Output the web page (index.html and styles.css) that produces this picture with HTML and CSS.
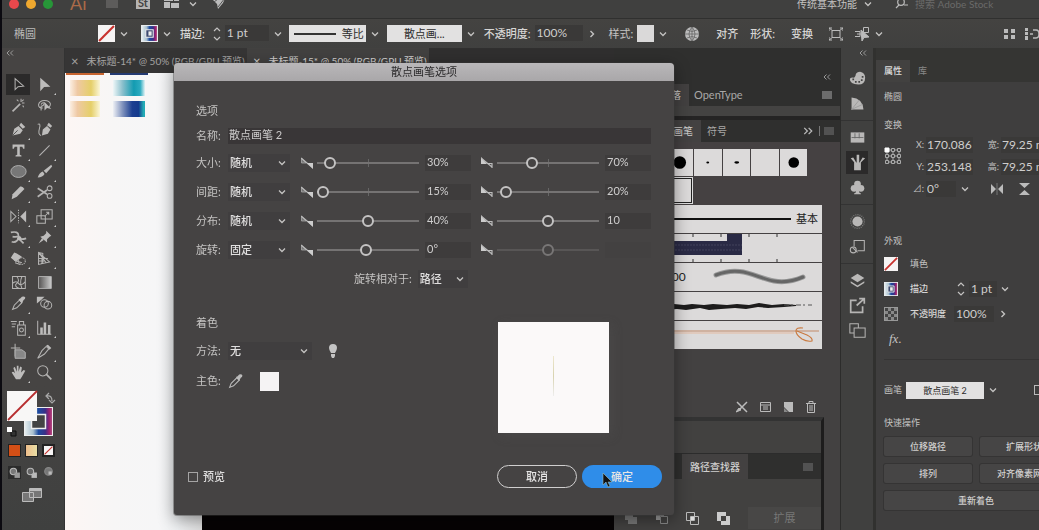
FILE: index.html
```html
<!DOCTYPE html>
<html lang="zh-CN">
<head>
<meta charset="utf-8">
<title>散点画笔选项</title>
<link rel="stylesheet" href="styles.css">
</head>
<body>
<svg class="defs" aria-hidden="true">
  <defs>
    <linearGradient id="strokeRamp"><stop offset="0" stop-color="#e4ecee"/><stop offset=".3" stop-color="#a9c0cf"/><stop offset=".5" stop-color="#1d4ba0"/><stop offset=".75" stop-color="#3a2f86"/><stop offset=".9" stop-color="#9c2170"/><stop offset="1" stop-color="#b04a80"/></linearGradient>
    <linearGradient id="fade"><stop offset="0" stop-color="#ccc" stop-opacity=".1"/><stop offset="1" stop-color="#ccc"/></linearGradient>
  </defs>
  <symbol id="chev" viewBox="0 0 10 10"><path d="M2 3.500 5 6.500l3-3" fill="none" stroke="currentColor" stroke-width="1.300"/></symbol>
  <symbol id="right" viewBox="0 0 10 10"><path d="M3.500 2 6.500 5l-3 3" fill="none" stroke="currentColor" stroke-width="1.400"/></symbol>
  <symbol id="spin" viewBox="0 0 8 16"><path d="M1 5l3-3 3 3M1 11l3 3 3-3" fill="none" stroke="currentColor" stroke-width="1.200"/></symbol>
  <symbol id="dbl" viewBox="0 0 8 6"><path d="M3.500.500 1 3l2.500 2.500M7 .500 4.500 3 7 5.500" fill="none" stroke="currentColor"/></symbol>
  <symbol id="menu" viewBox="0 0 10 8"><path d="M0 1h10M0 3h10M0 5h10M0 7h10" stroke="currentColor" fill="none"/></symbol>
  <symbol id="none" viewBox="0 0 16 16"><path d="M0 0h16v16H0z" fill="#f6f4f4"/><path d="M1 15 15 1" stroke="#c8322e" stroke-width="2"/></symbol>
  <symbol id="ramp" viewBox="0 0 16 16"><path d="M0 0h16v16H0z" fill="#e8ecee"/><path d="M1 1h14v14H1z" fill="url(#strokeRamp)"/><path d="M4.500 4.500h7v7h-7z" fill="#3c4a70" stroke="#eee"/><path d="M7 6h3v4H7z" fill="#eee"/></symbol>
  <symbol id="linkramp" viewBox="0 0 12 12"><path d="M.500 1v5H5z" fill="#777" stroke="#aaa" stroke-width=".8"/><path d="M0 1 12 11" stroke="#bbb" stroke-width="1.200"/><path d="M6 6h6v6z" fill="#ccc"/></symbol>
  <symbol id="bent" viewBox="0 0 12 12"><path d="M0 0v7h6z" fill="#ccc"/><path d="M0 1 11 10M6 6.500h5V11" fill="none" stroke="#bbb" stroke-width="1.200"/></symbol>
</svg>

<div class="app">
  <header class="topbar">
    <i class="light red"></i><i class="light amber"></i><i class="light green"></i>
    <span class="logo">Ai</span>
    <svg class="t-home" width="14" height="16"><path d="M1 1h9l3 3v11H1z" fill="#5d5c5b"/></svg>
    <span class="stock">St</span>
    <svg class="t-arr" width="15" height="14" fill="#bbb"><path d="M0 0h9v6H0zM0 7h6v6H0zM10 0h5v6h-5zM7 8h8v5H7z"/></svg>
    <svg class="ic10"><use href="#chev"/></svg>
    <svg class="t-gpu" width="14" height="15" fill="#bbb"><path d="M0 6 9 0h5l-4 9-5 6-1-5z"/><path d="m1 8 8-6M5 13l7-9" stroke="#555"/></svg>
    <button class="workspace-menu">传统基本功能 <svg class="ic10"><use href="#chev"/></svg></button>
    <label class="search"><svg width="14" height="12" fill="none" stroke="#bbb" stroke-width="1.200"><circle cx="6" cy="4" r="3.300"/><path d="M4 7 1 10M9 7h4"/></svg><input type="text" placeholder="搜索 Adobe Stock" aria-label="搜索"></label>
  </header>

  <div class="control">
    <span class="kind">椭圆</span>
    <svg class="sw"><use href="#none"/></svg><svg class="ic10"><use href="#chev"/></svg>
    <svg class="sw ml"><use href="#ramp"/></svg><svg class="ic10"><use href="#chev"/></svg>
    <label class="bold ml1" for="weight">描边:</label>
    <svg class="spin"><use href="#spin"/></svg>
    <input class="num w44" id="weight" value="1 pt"><svg class="ic10"><use href="#chev"/></svg>
    <button class="white profile"><i></i>等比</button><svg class="ic10"><use href="#chev"/></svg>
    <button class="white brush">散点画...</button><svg class="ic10"><use href="#chev"/></svg>
    <label class="bold ml1" for="opac">不透明度:</label>
    <input class="num w48" id="opac" value="100%"><svg class="ic10"><use href="#right"/></svg>
    <span class="ml">样式:</span><i class="style-sw"></i><svg class="ic10"><use href="#chev"/></svg>
    <svg class="ml2" width="16" height="16" viewBox="0 0 16 16"><circle cx="8" cy="8" r="7" fill="#bbb"/><path d="M8 1v14M1 8h14M3 4q5 3 10 0M3 12q5-3 10 0M8 1q-6 7 0 14M8 1q6 7 0 14" fill="none" stroke="#666" stroke-width=".8"/></svg>
    <span class="bold ml2">对齐</span><span class="bold ml">形状:</span><span class="bold ml2">变换</span>
    <svg class="ml2" width="14" height="14" fill="none" stroke="#bbb"><path d="M3 3.500h8v7H3zM0 4V1h3M11 1h3v3M14 10v3h-3M3 13H0v-3M0 1l4 3M14 1l-4 3M0 13l4-3M14 13l-4-3"/></svg>
    <svg class="ml" width="15" height="14" fill="none" stroke="#bbb"><path d="M8.500.500h5v5h-5zM0 4.500h5v5H0M2 7h4"/><path d="m6 3 8 7-5 .500L7 14z" fill="#bbb"/></svg><svg class="ic10"><use href="#chev"/></svg>
    <svg class="push" width="11" height="12" fill="#bbb"><path d="M0 1h4v4H0zM7 1h4v4H7zM0 7h4v4H0zM7 7h4v4H7z"/></svg>
    <svg class="endic" width="14" height="12" fill="#bbb"><path d="M0 0h3v3H0zM0 4h3v3H0zM0 8h3v4H0z"/><path d="M5 6h3M8 2h3q3 0 3 4t-3 4H8" fill="none" stroke="#bbb" stroke-width="1.500"/></svg>
  </div>

  <div class="work">
    <aside class="tools">
      <svg class="collapse"><use href="#dbl"/></svg>
      <div class="toolset">
        <button class="tool on" aria-label="选择"><svg viewBox="0 0 20 20"><path d="M6 3v13l3.500-3.500L16 12z" class="ln"/></svg></button>
        <button class="tool more" aria-label="直接选择"><svg viewBox="0 0 20 20"><path d="M5 2v16l4.500-5 7.500-.500z"/></svg></button>
        <button class="tool" aria-label="魔棒"><svg viewBox="0 0 20 20"><path d="m3 17 9-9" class="th"/><path d="M13 2v4M17 7h-3M16 3l-2 2M8 3l2 2M15 10l1 2" class="ln"/></svg></button>
        <button class="tool" aria-label="套索"><svg viewBox="0 0 20 20"><path d="M8 13q-5 0-5-4 1-5 7-5t7 4q0 3-2 4M6 9q1-3 4-2-1 4-4 4v5" class="ln"/><path d="M10 6v10l3-3 5 1z"/></svg></button>
      </div>
      <div class="toolset">
        <button class="tool more" aria-label="钢笔"><svg viewBox="0 0 20 20"><path d="m3 17 2-8 5-3 5 5-3 4-9 2zM11 5l2-3 5 5-3 2z"/><path d="m3 17 6-6" stroke="#444"/></svg></button>
        <button class="tool" aria-label="曲率"><svg viewBox="0 0 20 20"><path d="m7 17 1-7 5-4 4 4-3 5zM13 5l2-3 4 4-2 2z"/><path d="M2 4q4-2 2 5t2 8" class="ln"/></svg></button>
        <button class="tool more" aria-label="文字"><svg viewBox="0 0 20 20"><path d="M3 3h14v5h-1.500l-1-2.500h-3V15l2 1v1h-7v-1l2-1V5.500h-3L4.500 8H3z"/></svg></button>
        <button class="tool more" aria-label="直线"><svg viewBox="0 0 20 20"><path d="M4 16 16 4" class="ln"/></svg></button>
        <button class="tool more" aria-label="椭圆"><svg viewBox="0 0 20 20"><ellipse cx="10" cy="10" rx="9" ry="7" fill="#777" stroke="#bbb"/></svg></button>
        <button class="tool more" aria-label="画笔"><svg viewBox="0 0 20 20"><path d="M18 2 9 9l3 3 7-8zM8 10q-4 1-6 7 6 0 8-4z"/></svg></button>
        <button class="tool more" aria-label="铅笔"><svg viewBox="0 0 20 20"><path d="m2 18 1-6 9-9q3-1 5 3l-9 9z"/></svg></button>
        <button class="tool more" aria-label="剪刀"><svg viewBox="0 0 20 20"><path d="m2 5 11 7M2 15l11-8" class="th"/><circle cx="16" cy="5" r="2.800" class="ln"/><circle cx="16" cy="14" r="2.800" class="ln"/></svg></button>
      </div>
      <div class="toolset">
        <button class="tool more" aria-label="镜像"><svg viewBox="0 0 20 20"><path d="M1 4v12l6-6z" class="ln"/><path d="M19 3v14l-7-7z"/><path d="M10 2v16" class="ln" stroke-dasharray="1.500 1.500"/></svg></button>
        <button class="tool more" aria-label="比例缩放"><svg viewBox="0 0 20 20"><path d="M6 2h13v11H6zM1 9h10v9H1zM10 10l5-5M12 5h3v3" class="ln"/></svg></button>
        <button class="tool more" aria-label="宽度"><svg viewBox="0 0 20 20"><path d="M1 4q9-2 9 4t9 3M2 15q6 2 9-6M3 9q5 1 8-1M11 12l5 5" class="th"/><circle cx="11" cy="11" r="2.500"/></svg></button>
        <button class="tool more" aria-label="操控变形"><svg viewBox="0 0 20 20"><path d="m12 2 6 6-2 1-3 3v4L5 9l4-1 3-3zM3 17l4-6 2 2z"/></svg></button>
        <button class="tool more" aria-label="形状生成器"><svg viewBox="0 0 20 20"><path d="M3 6 5 3l3 1 6 4-7 6-6-5z"/><circle cx="14" cy="13" r="4" class="ln" stroke-dasharray="1.500 1"/><path d="m5 12 9 3M6 15l6 2" class="ln"/></svg></button>
        <button class="tool more" aria-label="透视网格"><svg viewBox="0 0 20 20"><path d="M3 3v14l13-3zM3 10h11M3 3l9 12M7 6v10M3 13h8M3 3l5 1v11" class="ln"/></svg></button>
      </div>
      <div class="toolset">
        <button class="tool" aria-label="网格"><svg viewBox="0 0 20 20"><path d="M3 3h15v14H3zM3 11q4-4 7 0t8-2M8 3q4 5 0 8t3 6M14 3q-3 7 0 14" class="ln"/></svg></button>
        <button class="tool" aria-label="渐变"><svg viewBox="0 0 20 20"><path d="M3 3h15v14H3z" style="fill:url(#fade);stroke:#bbb"/></svg></button>
        <button class="tool more" aria-label="吸管"><svg viewBox="0 0 20 20"><path d="M3 17 5 12l6-6 3 3-6 6z" class="ln"/><path d="m10 5 2-1 2-2q3-1 4 1 0 2-2 3l-2 4z"/></svg></button>
        <button class="tool" aria-label="混合"><svg viewBox="0 0 20 20"><path d="M1 2h9L6 6l-5 4z"/><circle cx="10" cy="10" r="4.500" class="ln"/><circle cx="14" cy="12" r="4.500" class="ln"/></svg></button>
      </div>
      <div class="toolset">
        <button class="tool more" aria-label="符号喷枪"><svg viewBox="0 0 20 20"><path d="M9 7h9v12H9zM11 7V3h5v4M1 3h7M2 6h5M2 9h4" class="ln"/><circle cx="13.500" cy="13" r="2.300" class="ln"/></svg></button>
        <button class="tool more" aria-label="柱形图"><svg viewBox="0 0 20 20"><path d="M2 2v16h16" class="ln"/><path d="M5 10h3v8H5zM9 4h3v14H9zM14 7h3v11h-3z"/></svg></button>
      </div>
      <div class="toolset">
        <button class="tool" aria-label="画板"><svg viewBox="0 0 20 20"><path d="M1 6h11M6 1v15" class="ln"/><path d="M6 8h8l4 3v7H6z" fill="#888" stroke="#bbb"/></svg></button>
        <button class="tool more" aria-label="切片"><svg viewBox="0 0 20 20"><path d="M2 18 7 9l5-5 3 3-5 6z" class="ln"/><path d="m12 3 2-1 4 4-2 2z"/></svg></button>
        <button class="tool more" aria-label="抓手"><svg viewBox="0 0 20 20"><path d="m7 18-5-8q2-2 4 1L4 5q1-2 2-1l2 5V2h2v7l2-6 2 1-1 6 3-3 2 1-4 7-2 3z"/></svg></button>
        <button class="tool" aria-label="缩放"><svg viewBox="0 0 20 20"><circle cx="8" cy="8" r="6" class="ln"/><path d="m12 12 6 6" class="th"/></svg></button>
      </div>
      <svg class="paint" viewBox="0 0 50 50"><path d="M17 17h29v29H17z" fill="#eee"/><path d="M18 18h27v27H18z" fill="url(#strokeRamp)"/><path d="M24.500 24.500h14v14h-14z" fill="#444" stroke="#eee" stroke-width="1.500"/><path d="M0 1h30v30H0z" fill="#f8f7f6"/><path d="M1 30 30 1" stroke="#b72d2e" stroke-width="1.800"/><path d="m42 3-3 3 3 3M40 6q5-1 5 5M42 10l3 3 3-3" fill="none" stroke="#aaa" stroke-width="1.200"/><path d="M4 41h5v5H4z" fill="#333" stroke="#111"/><path d="M0 37h5v5H0z" fill="#fff"/></svg>
      <div class="trio">
        <button class="chip orange" aria-label="颜色"></button><button class="chip tan" aria-label="渐变"></button><button class="chip nil" aria-label="无"><svg><use href="#none"/></svg></button>
      </div>
      <div class="trio modes">
        <button class="chip sel" aria-label="正常绘图"><svg viewBox="0 0 12 12"><circle cx="5" cy="5" r="3" fill="#777" stroke="#bbb"/><path d="M6 6h5v5H6z" fill="#999"/></svg></button><button class="chip" aria-label="背面绘图"><svg viewBox="0 0 12 12"><path d="M6 6h5v5H6z" fill="#bbb"/><circle cx="5" cy="5" r="3" fill="#666" stroke="#bbb"/></svg></button><button class="chip" aria-label="内部绘图"><svg viewBox="0 0 12 12"><circle cx="6" cy="5" r="3.500" fill="#777" stroke="#888"/><path d="M6 5h3v3H6z" fill="#bbb"/></svg></button>
      </div>
      <button class="screen" aria-label="屏幕模式"><svg width="20" height="16" fill="#777" stroke="#bbb"><path d="M.500 4.500h11v9H.500zM7.500.500h12v9h-12z"/><path d="M7 2h12" stroke-width="2"/></svg></button>
    </aside>

    <main class="doc">
      <nav class="tabs">
        <button class="doctab"><b>×</b>未标题-14* @ 50% (RGB/GPU 预览)</button>
        <button class="doctab open"><b>×</b>未标题-15* @ 50% (RGB/GPU 预览)</button>
      </nav>
      <div class="canvas">
        <div class="artboard">
          <i class="g-orange"></i><i class="g-navy"></i>
          <i class="g-yellow"></i><i class="g-teal"></i>
          <i class="g-yellow"></i><i class="g-blue"></i>
        </div>
      </div>
    </main>

    <section class="panels">
      <svg class="collapse end"><use href="#dbl"/></svg>
      <div class="ptabs type"><button class="ptab act">段落</button><button class="ptab lat">OpenType</button><svg class="pmenu"><use href="#menu"/></svg></div>
      <div class="strip"></div>
      <div class="ptabs brushes"><button class="ptab act">画笔</button><button class="ptab">符号</button><svg class="dblr" viewBox="0 0 8 6"><path d="M1 .500 3.500 3 1 5.500M4.500.500 7 3 4.500 5.500" fill="none" stroke="currentColor"/></svg><i class="bar"></i><svg class="pmenu dim"><use href="#menu"/></svg></div>
      <div class="brushbody">
        <div class="dots">
          <i></i>
          <svg viewBox="0 0 28 28"><circle cx="14" cy="14" r="6.500"/></svg>
          <svg viewBox="0 0 28 28"><ellipse cx="14" cy="14" rx="1.500" ry="1"/></svg>
          <svg viewBox="0 0 28 28"><ellipse cx="14" cy="14" rx="2.500" ry="1.200"/></svg>
          <i></i>
          <svg viewBox="0 0 28 28"><circle cx="14" cy="14" r="5.500"/></svg>
          <i></i><i class="pick-cell"></i>
        </div>
        <ul class="strokes">
          <li class="basic"><i></i>基本</li>
          <li><svg viewBox="0 0 198 28" preserveAspectRatio="xMaxYMid meet"><path d="M0 7h103V0h15v21H0z" fill="#2a2a45"/><path d="M0 11h118M0 16h118" stroke="#42425c" stroke-dasharray="2 1"/><path d="M69 0v3M69 25v3M97 0v3M97 25v3M125 0v3M125 25v3M153 0v3M153 25v3" stroke="#333"/></svg></li>
          <li><svg viewBox="0 0 198 28" preserveAspectRatio="xMaxYMid meet"><path d="M92 12c26-10 40 3 58 6 12 2 22-1 29-4" fill="none" stroke="#999" stroke-width="5" stroke-linecap="round"/><path d="M92 12c26-10 40 3 58 6 12 2 22-1 29-4" fill="none" stroke="#666" stroke-width="3" stroke-linecap="round"/></svg><span>5.00</span></li>
          <li><svg viewBox="0 0 198 28" preserveAspectRatio="xMaxYMid meet"><path d="m50 12 10 1 8-1 12 1 9-1 14 1 10-1 12 1 10-2 13 2 12-1 12 1v1l-12 1-16 1-10-1-12 2-11-1-14 1-12 1-9-2-14 2-9-1-14 1z" fill="#1d1c1c"/><path d="M160 13h28" stroke="#555" stroke-dasharray="5 2 2 3"/></svg></li>
          <li><svg viewBox="0 0 198 28" preserveAspectRatio="xMaxYMid meet"><path d="M40 10h155" stroke="#c28a68"/><path d="M40 12h130" stroke="#e4b9a0"/><path d="M179 7q-7-1-7 3t6 8q5 3 10 2 1-3-5-6l-10-4" fill="none" stroke="#c9793f" stroke-width="1.200"/></svg></li>
        </ul>
      </div>
      <div class="pfoot">
        <svg width="12" height="12"><path d="m1 1 10 10M11 1 4 8" stroke="#bbb" stroke-width="1.500"/><path d="M0 11 3 7l2 2z" fill="#bbb" stroke="#bbb"/></svg>
        <svg width="11" height="12"><path d="M.500 1.500h10v9H.500zM1 4h9M3 6h5M3 8h5" fill="none" stroke="#bbb"/></svg>
        <svg width="11" height="12"><path d="M1 1h9v10H6L1 6z" fill="#bbb"/><path d="M1 7v4h4z" fill="#888"/></svg>
        <svg width="10" height="12"><path d="M0 2.500h10M3 2V.500h4V2M1.500 3v8.500h7V3M4 4v6M6 4v6" fill="none" stroke="#bbb"/></svg>
      </div>
      <div class="lower">
        <div class="ghost"></div>
        <div class="ptabs path"><button class="ptab act">路径查找器</button><svg class="pmenu dim"><use href="#menu"/></svg></div>
        <div class="pathbody">
          <svg width="13" height="13"><path d="M1 1h8v4h4v7H4V8H1z" fill="#777"/></svg>
          <svg width="13" height="13"><path d="M1 1h8v3H5v4H1z" fill="#999"/><path d="M5.500 4.500h7v7h-7z" fill="none" stroke="#888"/></svg>
          <svg width="13" height="13"><path d="M.500.500h8v8h-8zM4.500 4.500h8v8h-8z" fill="none" stroke="#bbb"/><path d="M5 5h3v3H5z" fill="#ddd"/></svg>
          <svg width="13" height="13" fill="#ccc"><path fill-rule="evenodd" d="M0 0h9v4h4v9H4V9H0zM4 4v5h5V4z"/></svg>
          <button class="expand" disabled>扩展</button>
        </div>
      </div>
    </section>

    <aside class="dock">
      <svg class="collapse end"><use href="#dbl"/></svg>
      <div class="dockset">
        <button aria-label="颜色"><svg viewBox="0 0 20 20"><path d="M1 11q0-3 5-2 2-1 2-4 1-3 5-3 6 1 6 7 0 8-8 8-10 0-10-6z"/><path d="M4 11h2M7 14h2M11 14h2M14 12h2M15 8h2" stroke="#444" stroke-width="2"/></svg></button>
        <button aria-label="颜色参考"><svg viewBox="0 0 20 20"><path d="M3 3q13 1 14 14H3z"/><path d="M3 17 12 6M3 17l13-6" stroke="#999"/></svg></button>
      </div>
      <div class="dockset">
        <button aria-label="色板"><svg viewBox="0 0 20 20"><path d="M2 4h16v12H2z"/><path d="M7 5v6M12 5v6M3 10h14" stroke="#666"/></svg></button>
        <button class="on" aria-label="画笔"><svg viewBox="0 0 20 20"><path d="M6 10h8v9H6zM2 5l3-1 4 7H7zM9 1h3v10H9zM16 4l3 1-6 6h-1z"/></svg></button>
        <button aria-label="符号"><svg viewBox="0 0 20 20"><circle cx="10" cy="6" r="4"/><circle cx="6" cy="11" r="4"/><circle cx="14" cy="11" r="4"/><path d="M9 9h2l1 7 2 1v1H6v-1l2-1z"/></svg></button>
      </div>
      <div class="dockset">
        <button aria-label="外观"><svg viewBox="0 0 20 20"><circle cx="10" cy="10" r="6"/><circle cx="10" cy="10" r="8" fill="none" stroke="#888" stroke-width="1.500" stroke-dasharray="1 1.500"/></svg></button>
        <button aria-label="图形样式"><svg viewBox="0 0 20 20"><path d="M6 10V3h12v12h-8" class="ln"/><circle cx="5" cy="14" r="3.500" class="ln"/><path d="m4 11 6 6" class="ln"/></svg></button>
      </div>
      <div class="dockset">
        <button aria-label="图层"><svg viewBox="0 0 20 20"><path d="m10 2 8 5-8 5-8-5z"/><path d="m2 11 8 5 8-5v2l-8 5-8-5z"/></svg></button>
        <button aria-label="资源导出"><svg viewBox="0 0 20 20"><path d="M9 4H2v14h14v-7" class="th"/><path d="m9 10 9-8M12 2h6v6" class="th"/></svg></button>
        <button aria-label="画板"><svg viewBox="0 0 20 20"><path d="M6 13H1V2h10v5M6 7h13v11H6z" class="ln"/></svg></button>
      </div>
    </aside>

    <aside class="props">
      <div class="propstabs"><button class="act">属性</button><button>库</button></div>
      <div class="propsbody">
        <h3>椭圆</h3>
        <h3 class="t2">变换</h3>
        <div class="transform">
          <svg class="refpt" viewBox="0 0 18 18" fill="none" stroke="#aaa"><path d="M3 3h12v12H3zM9 3v12M3 9h12"/><g fill="#444"><path d="M7.500 1.500h3v3h-3zM13.500 1.500h3v3h-3zM1.500 7.500h3v3h-3zM7.500 7.500h3v3h-3zM13.500 7.500h3v3h-3zM1.500 13.500h3v3h-3zM7.500 13.500h3v3h-3zM13.500 13.500h3v3h-3z"/></g><path d="M1 1h4v4H1z" fill="#fff" stroke="#fff"/></svg>
          <label for="px">X:</label><input class="num" id="px" value="170.086"><label for="pw">宽:</label><input class="num" id="pw" value="79.25 mm">
          <label for="py">Y:</label><input class="num" id="py" value="253.148"><label for="ph">高:</label><input class="num" id="ph" value="79.25 mm">
          <label for="ang">⊿:</label><span class="ang"><input class="num" id="ang" value="0°"><svg class="ic10"><use href="#chev"/></svg></span>
          <svg class="flip" width="42" height="12" fill="#bbb"><path d="M0 1v10l5-5zM12 1v10L7 6zM28 0h11l-5.500 5zM28 12h11l-5.500-5z"/><path d="M6 0v12" stroke="#777"/></svg>
        </div>
        <h3 class="t3">外观</h3>
        <div class="arow"><svg class="sw14"><use href="#none"/></svg><span>填色</span></div>
        <div class="arow"><svg class="sw14"><use href="#ramp"/></svg><label class="bold" for="w2">描边</label><svg class="spin"><use href="#spin"/></svg><input class="num w28" id="w2" value="1 pt"><svg class="ic10"><use href="#chev"/></svg></div>
        <div class="arow"><i class="checker"></i><label class="bold" for="o2">不透明度</label><input class="num w40" id="o2" value="100%"><svg class="ic10 r"><use href="#right"/></svg></div>
        <div class="arow fx">fx.</div>
        <div class="arow brushrow"><span>画笔</span><button class="white pb">散点画笔 2</button><svg class="ic10"><use href="#chev"/></svg><i class="sq"></i></div>
        <h3 class="t4">快速操作</h3>
        <div class="quick"><button>位移路径</button><button>扩展形状</button><button>排列</button><button>对齐像素网格</button><button class="wide">重新着色</button></div>
      </div>
    </aside>
  </div>
</div>

<form class="dialog" role="dialog" aria-labelledby="dlg">
  <h1 id="dlg">散点画笔选项</h1>
  <div class="dbody">
    <h2>选项</h2>
    <div class="name"><label for="nm">名称:</label><input id="nm" value="散点画笔 2"></div>
    <div class="opt"><label for="s1">大小:</label><span class="pick"><select id="s1"><option>随机</option></select><svg><use href="#chev"/></svg></span><svg class="link"><use href="#linkramp"/></svg><input type="range" value="8" aria-label="大小最小值"><input class="val" value="30%" aria-label="大小最小"><svg class="link second"><use href="#bent"/></svg><input type="range" value="32" aria-label="大小最大值"><input class="val" value="70%" aria-label="大小最大"></div>
    <div class="opt"><label for="s2">间距:</label><span class="pick"><select id="s2"><option>随机</option></select><svg><use href="#chev"/></svg></span><svg class="link"><use href="#linkramp"/></svg><input type="range" value="0" aria-label="间距最小值"><input class="val" value="15%" aria-label="间距最小"><svg class="link second"><use href="#bent"/></svg><input type="range" value="3" aria-label="间距最大值"><input class="val" value="20%" aria-label="间距最大"></div>
    <div class="opt"><label for="s3">分布:</label><span class="pick"><select id="s3"><option>随机</option></select><svg><use href="#chev"/></svg></span><svg class="link"><use href="#linkramp"/></svg><input type="range" value="50" aria-label="分布最小值"><input class="val" value="40%" aria-label="分布最小"><svg class="link second"><use href="#bent"/></svg><input type="range" value="50" aria-label="分布最大值"><input class="val" value="10" aria-label="分布最大"></div>
    <div class="opt"><label for="s4">旋转:</label><span class="pick"><select id="s4"><option>固定</option></select><svg><use href="#chev"/></svg></span><svg class="link"><use href="#linkramp"/></svg><input type="range" value="48" aria-label="旋转最小值"><input class="val" value="0°" aria-label="旋转最小"><svg class="link second"><use href="#bent"/></svg><input type="range" value="50" disabled aria-label="旋转最大值"><input class="val off" value="" disabled aria-label="旋转最大"></div>
    <div class="relative-to"><label for="rel">旋转相对于:</label><span class="pick short"><select id="rel"><option>路径</option></select><svg><use href="#chev"/></svg></span></div>
    <div class="colorize">
      <div>
        <h2>着色</h2>
        <div class="crow method"><label for="me">方法:</label><span class="pick long"><select id="me"><option>无</option></select><svg><use href="#chev"/></svg></span><svg class="bulb" width="10" height="14" fill="#c4c4c4"><path d="M5 0q4 0 4 4 0 2-2 5H3Q1 6 1 4q0-4 4-4zM3 10h4v2L6 14H4l-1-2z"/></svg></div>
        <div class="crow"><span class="lab">主色:</span><svg width="16" height="16" viewBox="0 0 20 20" fill="#bbb"><path d="m2 18 2-5 7-7 3 3-7 7z" fill="none" stroke="#bbb" stroke-width="1.300"/><path d="m10 5 2-1 2-2q3-1 4 1 0 2-2 3l-2 4z"/></svg><button type="button" class="key" aria-label="主色"></button></div>
      </div>
      <div class="preview"><i></i></div>
    </div>
    <div class="actions">
      <label class="check"><input type="checkbox">预览</label>
      <button type="button" class="cancel">取消</button>
      <button type="button" class="ok">确定<svg class="cursor" width="11" height="16"><path d="M1 1v12l3-3 2 5 2-1-2-4h4z" fill="#111" stroke="#9bb" stroke-width=".6"/></svg></button>
    </div>
  </div>
</form>
</body>
</html>
```

FILE: styles.css
```css
* { box-sizing: border-box; }
body { margin: 0; height: 100vh; overflow: hidden; background: #333; color: #c4c3c2; font: 11px/16px Lato, "Noto Sans CJK SC", sans-serif; }
button, input, select { font: inherit; color: inherit; border: 0; background: none; padding: 0; margin: 0; border-radius: 0; }
svg { flex: none; display: block; }
i { display: block; flex: none; }
h1, h2, h3 { margin: 0; font: inherit; }
ul { margin: 0; padding: 0; list-style: none; }
.defs { position: absolute; width: 0; height: 0; }
.app { height: 100vh; display: flex; flex-direction: column; border-left: 2px solid #0b0a10; }
.bold { font-weight: 500; color: #d6d5d4; }
.ic10 { width: 10px; height: 10px; }
.spin { width: 8px; height: 16px; }

/* title bar */
.topbar { height: 19px; flex: none; display: flex; align-items: flex-end; padding: 0 0 9px 7px; background: #40403f; border-bottom: 1px solid #30302f; overflow: hidden; }
.light { width: 10px; height: 10px; border-radius: 50%; margin-right: 7px; }
.red { background: #e8484c; } .amber { background: #efa82f; } .green { background: #279638; }
.logo { margin-left: 10px; width: 20px; font-size: 18px; line-height: 12px; color: #ab6a48; }
.t-home { margin-left: 15px; }
.stock { margin-left: 17px; width: 14px; height: 16px; background: #b5b4b3; color: #444; font-weight: 700; text-align: center; line-height: 20px; }
.t-arr { margin: 0 9px 0 14px; }
.t-gpu { margin-left: 15px; }
.workspace-menu { display: flex; gap: 6px; margin-left: auto; align-items: center; line-height: 12px; height: 10px; font-size: 10px; }
.search { display: flex; align-items: center; gap: 6px; width: 144px; height: 10px; margin-left: 22px; color: #777; }
.search input { width: 100%; height: 10px; font-size: 10px; } .search input::placeholder { color: #6a6a69; opacity: 1; }

/* control bar */
.control { flex: none; height: 29px; display: flex; align-items: center; gap: 4px; padding-left: 12px; background: linear-gradient(#444341, #40403f); white-space: nowrap; overflow: hidden; }
.kind { width: 80px; color: #bbb; }
.sw { width: 17px; height: 17px; }
.ml1 { margin-left: 4px; } .ml { margin-left: 8px; } .ml2 { margin-left: 12px; }
.control .spin { margin-left: 4px; }
.num { min-width: 0; width: 100%; height: 16px; background: #3a3938; padding-left: 2px; font-size: 12px; color: #cfcecd; }
.control .num { margin-top: -2px; }
.num.w44 { width: 44px; } .num.w48 { width: 48px; } .num.w28 { width: 28px; } .num.w40 { width: 40px; }
.white { background: #e2e1e1; color: #2e2d2d; height: 17px; line-height: 17px; }
.profile { display: flex; align-items: center; gap: 6px; width: 77px; padding-left: 5px; margin-left: 2px; }
.profile i { width: 42px; height: 2px; background: #333; }
.brush { width: 75px; margin-left: 3px; }
.style-sw { width: 17px; height: 17px; background: #dad9d9; }
.push { margin-left: auto; } .endic { margin: 0 0 0 6px; }

/* workspace */
.work { flex: 1; min-height: 0; display: flex; }
.collapse { width: 8px; height: 6px; color: #999; margin: 2px 0 18px 4px; }
.tools { width: 63px; flex: none; background: linear-gradient(#464443 70%, #3f403f); border-right: 1px solid #333; }
.toolset { display: grid; grid-template-columns: 26px 26px; padding-left: 4px; margin-bottom: 3px; }
.tool { width: 24px; height: 21px; display: grid; place-items: center; position: relative; }
.tool svg { width: 17px; height: 17px; fill: #bdbcbb; }
.tool .ln, .ln { fill: none; stroke: #b5b4b3; stroke-width: 1.200; } .th { fill: none; stroke: #b5b4b3; stroke-width: 2; }
.on { background: #2b2a2a; }
.more::after { content: ""; position: absolute; right: 0; bottom: 0; border: 1px solid transparent; border-right-color: #ccc; border-bottom-color: #ccc; }
.paint { width: 50px; height: 50px; margin: 7px 0 0 5px; }
.trio { display: flex; gap: 4px; padding-left: 6px; margin-top: 4px; }
.chip { width: 13px; height: 13px; border: 1px solid #222; }
.chip svg { width: 100%; height: 100%; }
.orange { background: #d44f16; } .tan { background: linear-gradient(90deg, #eebd8b, #e9dea5); }
.nil { border-width: 2px; }
.modes { margin-top: 9px; } .modes .chip { border: 0; } .modes .sel { background: #2b2b2b; }
.screen { margin: 9px 0 0 20px; }

.doc { flex: 1; min-width: 0; display: flex; flex-direction: column; background: #302f2f; }
.tabs { display: flex; height: 25px; flex: none; }
.doctab { width: 182px; flex: none; white-space: nowrap; overflow: hidden; text-align: left; padding-left: 6px; font-size: 10px; line-height: 27px; color: #a5a4a3; background: #363535; }
.doctab b { font-size: 13px; font-weight: 400; margin-right: 8px; vertical-align: -1px; }
.doctab.open { background: #424140; color: #d2d1d0; }
.canvas { flex: 1; display: flex; background: #060304; }
.artboard { width: 137px; background: linear-gradient(90deg, #fdf6f4, #f7f6f6 35%, #f6f6f7 68%, #eef0f2 82%, #ddd); display: grid; grid-template-columns: 38px 38px; grid-template-rows: 2px 16px 16px; gap: 5px 6px; align-content: start; padding-left: 1px; }
.g-orange { background: #c8642f; } .g-navy { background: #243a72; }
.g-yellow { background: linear-gradient(90deg, #fbeee2, #efc9a4 25%, #e5cf69 70%, #fbf6d8); margin: 0 4px; }
.g-teal { background: linear-gradient(90deg, #eef6f7, #8abfcc 30%, #139bb1 65%, #2cabc0 85%, #e5f3f5); margin: 0 3px; }
.g-blue { background: linear-gradient(90deg, #eef0f5, #8092bd 30%, #1c3f91 60%, #153a8d 80%, #22aab5 95%); margin: 0 3px; }

.panels { width: 227px; flex: none; display: flex; flex-direction: column; background: linear-gradient(#2f2f2e 60px, #434141 60px); border-right: 1px solid #2c2c2b; overflow: hidden; }
.end { align-self: flex-end; }
.panels > .collapse { margin: 26px 9px 4px; }
.ptabs { display: flex; align-items: center; background: #2f2f2e; }
.ptab { height: 100%; padding: 0 8px; font-size: 10px; color: #a9a8a7; }
.ptab.act { background: #434141; color: #d0cfce; }
.type { height: 22px; flex: none; padding-left: 37px; } .type .act { padding-left: 10px; } .lat { font-size: 11px; padding-left: 5px; }
.pmenu { width: 10px; height: 8px; margin: 0 8px 0 auto; color: #aaa; } .dim { color: #777; }
.strip { height: 14px; flex: none; border-bottom: 4px solid #252424; background: #444342; }
.brushes { height: 22px; flex: none; padding-left: 51px; }
.brushes .ptab + .ptab { padding-left: 6px; }
.dblr { width: 10px; height: 8px; margin-left: auto; color: #bbb; }
.bar { width: 1px; height: 10px; background: #777; margin: 0 4px 0 6px; } .brushes .pmenu { margin-left: 0; margin-right: 6px; }
.brushbody { padding: 7px 18px 0 10px; background: #454142; }
.dots { display: grid; grid-template-columns: repeat(6, 1fr); grid-auto-rows: 27px; gap: 1px; width: 170px; margin: 0 0 1px 13px; }
.dots > * { background: #dcdada; width: 100%; height: 100%; }
.dots .pick-cell { border: 1px solid #ddd; outline: 1px solid #222; outline-offset: -2px; }
.strokes li { height: 28px; margin-bottom: 1px; background: #dcdada; color: #222; display: flex; align-items: center; position: relative; }
.strokes svg { width: 100%; height: 28px; } .strokes span { position: absolute; left: 38px; font-size: 12px; }
.basic i { width: 167px; height: 2px; background: #111; margin-right: 5px; }
.pfoot { display: flex; justify-content: flex-end; align-items: center; gap: 12px; height: 21px; flex: none; margin-top: 46px; padding-right: 24px; }
.lower { flex: 1; margin-right: 16px; border-right: 3px solid #1d1c1c; border-top: 4px solid #333; background: #424140; }
.ghost { height: 33px; border-bottom: 1px solid #2c2c2c; }
.path { height: 25px; padding-left: 68px; } .path .act { font-weight: 500; font-size: 10px; }
.pathbody { display: flex; align-items: center; gap: 18px; padding: 28px 0 0 10px; }
.expand { flex: 1; height: 22px; background: #484746; color: #777; }

.dock { width: 35px; flex: none; display: flex; flex-direction: column; background: #40403f; border-right: 3px solid #31312f; }
.dock > .collapse { margin: 2px 6px 11px; }
.dockset { display: grid; justify-content: center; gap: 2px; padding-bottom: 5px; margin-bottom: 5px; border-bottom: 1px solid #333; }
.dockset:last-child { border: 0; }
.dockset button { width: 22px; height: 23px; display: grid; place-items: center; }
.dockset svg { width: 17px; height: 17px; fill: #b9b8b7; }

.props { width: 163px; flex: none; overflow: hidden; font-size: 9px; padding-top: 12px; background: #353533; }
.propstabs { display: flex; height: 22px; }
.propstabs button { padding: 0 8px; color: #888; } .propstabs .act { background: #424140; color: #ddd; font-weight: 500; }
.propsbody { width: 200px; height: 100%; padding: 7px 8px; background: #3f3e3e; }
.t2 { margin-top: 12px; }
.transform { display: grid; grid-template-columns: 28px 14px 47px 28px 67px; grid-auto-rows: 16px; row-gap: 6px; align-items: center; margin-top: 4px; }
.transform label { text-align: right; padding-right: 2px; white-space: nowrap; }
.transform .num { padding-left: 1px; }
.refpt { width: 18px; height: 18px; grid-row: 1 / 3; }
.transform label[for="ang"] { grid-column: 2; }
.ang { display: flex; align-items: center; gap: 4px; } .ang .num { width: 30px; }
.flip { margin-left: 18px; }
.t3 { margin-top: 36px; }
.arow { height: 16px; margin-top: 9px; display: flex; align-items: center; white-space: nowrap; }
.t3 + .arow { margin-top: 7px; }
.sw14 { width: 14px; height: 14px; margin-right: 12px; }
.arow .spin { margin: 0 4px 0 29px; }
.arow .ic10 { margin-left: 3px; } .arow .w40 { margin-left: 8px; } .arow .r { margin-left: 4px; }
.checker { width: 14px; height: 14px; margin-right: 12px; border: 1px solid #999; background: repeating-conic-gradient(#888 0 25%, #444 0 50%) 0 0 / 6px 6px; }
.fx { font: italic 13px/16px "Liberation Serif", serif; padding-left: 5px; }
.brushrow { margin-top: 12px; padding-top: 22px; height: 39px; border-top: 1px solid #353434; }
.pb { width: 78px; margin-left: 4px; } .brushrow .ic10 { margin-left: 4px; }
.sq { width: 10px; height: 10px; border: 1px solid #bbb; margin-left: 36px; }
.t4 { margin-top: 17px; }
.quick { display: grid; grid-template-columns: 1fr 1fr; gap: 8px; margin-top: 6px; }
.quick button { height: 19px; background: #464545; box-shadow: 0 0 0 1px #353434; border-radius: 2px; font-weight: 500; color: #d0cfce; }
.quick .wide { grid-column: 1 / 3; }

/* dialog floating over the workspace */
.dialog { position: absolute; left: 174px; top: 63px; width: 500px; border-radius: 4px 4px 3px 3px; overflow: hidden; background: #454343; box-shadow: 0 0 0 1px #3a393966; filter: drop-shadow(0 4px 8px #00000066); }
.dialog h1 { height: 18px; line-height: 18px; text-align: center; background: linear-gradient(#b9b7b9, #a9a7a9); color: #2b2a2b; }
.dbody { padding: 22px 12px 27px 22px; }
.name { display: flex; align-items: center; margin: 9px 0 4px; }
.name label, .opt label, .crow label, .lab { width: 32px; flex: none; }
.name input { flex: 1; height: 16px; margin-right: 11px; padding: 0 1px 2px; background: #393637; color: #cbcaca; }
.opt { display: flex; align-items: center; height: 29px; }
.pick { display: grid; grid-template-columns: 1fr 10px; width: 62px; height: 18px; align-items: center; background: #403e3f; }
.pick select { grid-area: 1 / 1 / 2 / 3; appearance: none; width: 100%; height: 18px; padding-left: 2px; font-weight: 500; color: #e0dfdf; }
.pick svg { grid-area: 1 / 2; width: 10px; height: 10px; pointer-events: none; margin-left: -3px; }
.link { width: 12px; height: 12px; margin: 0 4px 0 11px; }
.second { margin-left: 10px; }
.val { width: 46px; height: 16px; padding: 0 0 2px 2px; margin-left: 6px; background: #3e3c3c; font-size: 11px; color: #cfcece; }
.val.off { background: #434141; }
input[type=range] { appearance: none; width: 102px; height: 14px; background: linear-gradient(#757373, #757373) 0 6px / 100% 2px no-repeat, linear-gradient(#666, #666) 50% 3px / 1px 8px no-repeat; }
input[type=range]::-webkit-slider-thumb { appearance: none; width: 12px; height: 12px; border: 2px solid #c4c3c3; border-radius: 50%; background: #454343; }
input[type=range]:disabled { opacity: .4; }
.relative-to { display: flex; align-items: center; gap: 6px; padding-left: 158px; height: 29px; }
.short { width: 50px; } .long { width: 84px; }
.colorize { display: flex; justify-content: space-between; margin: 22px 53px 0 0; }
.crow { display: flex; align-items: center; height: 20px; }
.method { margin: 10px 0; }
.bulb { margin-left: 16px; }
.key { width: 19px; height: 19px; margin-left: 16px; background: #f5f3f4; }
.colorize h2 { margin-top: -7px; }
.colorize .method { margin-top: 10px; }
.colorize > div:first-child { padding-top: 7px; }
.preview { width: 111px; height: 111px; background: #fbf9f9; display: grid; justify-content: center; padding-top: 34px; box-shadow: 3px 3px 10px #55535355; }
.preview i { width: 1px; height: 40px; background: linear-gradient(#eee8cf, #d8d3b0, #eee); }
.colorize .preview { margin-top: 7px; }
.actions { display: flex; align-items: center; margin: 32px 0 0 -8px; gap: 5px; }
.check { display: flex; align-items: center; gap: 5px; margin-right: auto; color: #dcdbdb; font-weight: 500; }
.check input { appearance: none; width: 10px; height: 10px; border: 1px solid #a5a4a4; }
.cancel, .ok { width: 80px; height: 23px; border-radius: 12px; font-weight: 500; color: #e6e5e5; }
.cancel { border: 1px solid #d0cfcf; }
.ok { background: #2f8de9; position: relative; }
.cursor { position: absolute; left: 20px; top: 7px; }
```
